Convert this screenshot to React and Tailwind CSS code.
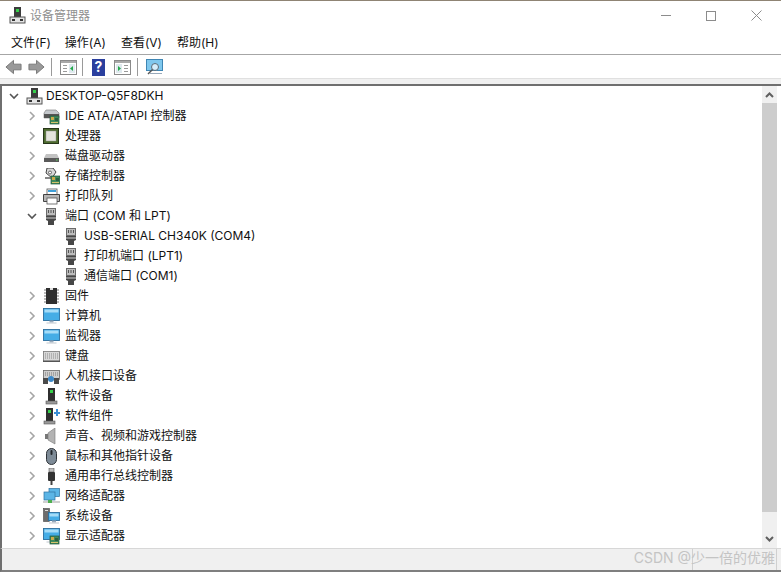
const cjk = "font-['Inter','Noto_Sans_CJK_SC',sans-serif]";

function Chevron({ open }) {
  return (
    <svg width="10" height="10" viewBox="0 0 10 10" fill="none" stroke={open ? '#555' : '#a6a6a6'} strokeWidth="1.6">
      {open ? <path d="M1 3l4 4 4-4" /> : <path d="M3 1l4 4-4 4" />}
    </svg>
  );
}

const Chip = ({ x = 8, y = 8 }) => (
  <g>
    <rect x={x} y={y} width="9" height="8" fill="#3f8a5c" stroke="#24563a" strokeWidth=".7" />
    <rect x={x + 1} y={y + 1} width="3" height="3" fill="#c9a94b" />
    <rect x={x + 5} y={y + 2} width="3" height="3" fill="#2b5f40" />
    <rect x={x + 1} y={y + 6} width="7" height="1" fill="#d6c36a" />
  </g>
);

const Tower = ({ x = 3 }) => (
  <g>
    <rect x={x + 2} y="0" width="7" height="13" fill="#2f2f2f" />
    <rect x={x + 4} y="2" width="3" height="3" fill="#35d04a" />
    <rect x={x} y="13" width="11" height="3" fill="#9a9a9a" stroke="#555" strokeWidth=".6" />
  </g>
);

const Screen = ({ x = 1, y = 2, w = 15, h = 10 }) => (
  <g>
    <rect x={x} y={y} width={w} height={h} fill="#45ade6" stroke="#2c6f9e" strokeWidth=".9" />
    <rect x={x + 1} y={y + 1} width={w - 2} height="3" fill="#a5dcf7" />
    <rect x={x + w / 2 - 2} y={y + h} width="4" height="2" fill="#9ab" />
    <rect x={x + w / 2 - 5} y={y + h + 2} width="10" height="1" fill="#c0c8cf" />
  </g>
);

function DeviceIcon({ name }) {
  const shapes = {
    root: (
      <g>
        <rect x="5" y="0" width="7" height="10" fill="#3c3c3c" />
        <rect x="7" y="2" width="3" height="3" fill="#35d04a" />
        <rect x="1" y="10" width="15" height="6" fill="#e4e4e4" stroke="#555" />
        <rect x="3" y="12" width="3" height="2" fill="#333" />
        <rect x="11" y="12" width="3" height="2" fill="#333" />
      </g>
    ),
    ide: (
      <g>
        <path d="M1 5l2-3h10l3 3v5H1z" fill="#c4c8cc" stroke="#777" strokeWidth=".6" />
        <rect x="1" y="6" width="15" height="4" fill="#555" />
        <Chip x={7} y={8} />
      </g>
    ),
    cpu: (
      <g>
        <rect x=".5" y=".5" width="15" height="15" fill="#4d6b2e" stroke="#27361a" />
        <rect x="3" y="3" width="10" height="10" fill="#e4e4dc" stroke="#999" strokeWidth=".5" />
      </g>
    ),
    disk: (
      <g>
        <path d="M3 6h11l2 4v4H1v-4z" fill="#c2c2c2" />
        <rect x="1" y="10" width="15" height="4" fill="#5a5a5a" />
        <rect x="13" y="11.5" width="1.5" height="1" fill="#5ddc5d" />
      </g>
    ),
    storage: (
      <g>
        <path d="M4 0h6l3 4-4 6-6-5z" fill="#d8d8d8" stroke="#333" strokeWidth=".9" />
        <circle cx="7" cy="4.5" r="1.5" fill="#fff" stroke="#333" strokeWidth=".7" />
        <rect x="2" y="9" width="6" height="2" fill="#888" />
        <Chip x={8} y={8} />
      </g>
    ),
    printer: (
      <g>
        <rect x="4" y="1" width="10" height="6" fill="#fff" stroke="#555" strokeWidth=".8" />
        <rect x="5" y="2" width="8" height="2" fill="#3f9fd8" />
        <path d="M0.5 6.5h16v7h-16z" fill="#b5b5b5" stroke="#333" strokeWidth=".9" />
        <rect x="4" y="10" width="10" height="6" fill="#fff" stroke="#555" strokeWidth=".8" />
      </g>
    ),
    port: (
      <g>
        <path d="M3 6h10v6l-2 1v4H5v-4l-2-1z" fill="#474747" />
        <rect x="3.5" y=".5" width="9" height="7" fill="#bdbdbd" stroke="#6a6a6a" />
        <path d="M5.5 2v3M8 2v3M10.5 2v3" stroke="#555" />
        <rect x="3" y="9" width="10" height="2" fill="#8a8a8a" />
      </g>
    ),
    firmware: (
      <g>
        <rect x="3" y="0" width="11" height="16" fill="#2f2f2f" />
        <path d="M1 2h2M1 5h2M1 8h2M1 11h2M1 14h2M14 2h2M14 5h2M14 8h2M14 11h2M14 14h2" stroke="#777" strokeWidth="1.2" />
        <rect x="7" y="0" width="3" height="2" fill="#ddd" />
      </g>
    ),
    computer: <Screen x={.5} y={.5} w={16} h={12} />,
    monitor: <Screen x={.5} y={1.5} w={16} h={11} />,
    keyboard: (
      <g>
        <rect x=".5" y="3.5" width="16" height="10" fill="#d8d8d8" stroke="#777" strokeWidth=".8" />
        <path d="M2 6h13M2 8h13M2 10h13" stroke="#8b8b8b" strokeDasharray="1 1" />
        <rect x="0" y="12.5" width="17" height="1.5" fill="#555" />
      </g>
    ),
    hid: (
      <g>
        <rect x=".5" y="2.5" width="16" height="9" fill="#cfcfcf" stroke="#666" strokeWidth=".8" />
        <path d="M2 5h13M2 7h13" stroke="#777" strokeDasharray="1 1" />
        <rect x="0" y="10" width="5" height="6" fill="#4a4a4a" />
        <rect x="11" y="10" width="5" height="6" fill="#4a4a4a" />
        <circle cx="8" cy="11" r="3" fill="#3c89c9" />
      </g>
    ),
    soft: <Tower x={3} />,
    softpart: (
      <g>
        <Tower x={1} />
        <path d="M11 4h2V1h2v3h2v2h-2v2h-2V6h-2z" fill="#3a8fd6" />
      </g>
    ),
    sound: (
      <g>
        <path d="M2 6h3v5H2z" fill="#777" />
        <path d="M5 5l7-5v16l-7-4z" fill="#b3b3b3" stroke="#777" strokeWidth=".6" />
      </g>
    ),
    mouse: (
      <g>
        <rect x="3.5" y=".5" width="10" height="16" rx="5" fill="#7e8b97" stroke="#2e3338" />
        <rect x="7.5" y="2" width="2" height="5" rx="1" fill="#22272b" />
      </g>
    ),
    usb: (
      <g>
        <rect x="6" y="0" width="5" height="4" fill="#bdbdbd" stroke="#555" strokeWidth=".6" />
        <rect x="5" y="4" width="7" height="9" rx="1" fill="#333" />
        <rect x="7.5" y="13" width="2" height="4" fill="#444" />
      </g>
    ),
    network: (
      <g>
        <rect x="6" y=".5" width="10.5" height="8" fill="#5bb5e6" stroke="#2c6f9e" strokeWidth=".7" />
        <rect x="1" y="4" width="11" height="8" fill="#5bb5e6" stroke="#2c6f9e" strokeWidth=".7" />
        <rect x="0" y="13" width="17" height="2" fill="#d0d0d0" />
        <rect x="5" y="12" width="4" height="3" fill="#4caf50" />
      </g>
    ),
    system: (
      <g>
        <rect x=".5" y=".5" width="6" height="13" fill="#6c6c6c" stroke="#333" strokeWidth=".5" />
        <rect x="2" y="2" width="3" height="1" fill="#ddd" />
        <Screen x={5.5} y={4.5} w={11} h={8} />
      </g>
    ),
    display: (
      <g>
        <Screen x={.5} y={.5} w={16} h={11} />
        <Chip x={7} y={8} />
      </g>
    ),
  };
  return (
    <svg width="17" height="17" viewBox="0 0 17 17" className="shrink-0">
      {shapes[name]}
    </svg>
  );
}

function TreeRow({ label, icon, open, leaf }) {
  return (
    <div className={`h-5 flex items-center ${leaf ? 'pl-[63px]' : 'pl-[27px]'}`}>
      {!leaf && (
        <span className="w-[16px] flex shrink-0">
          <Chevron open={open} />
        </span>
      )}
      <DeviceIcon name={icon} />
      <span className={`${leaf ? 'ml-[4px]' : 'ml-[5px]'} whitespace-nowrap`}>{label}</span>
    </div>
  );
}

const rows = [
  { label: 'IDE ATA/ATAPI 控制器', icon: 'ide' },
  { label: '处理器', icon: 'cpu' },
  { label: '磁盘驱动器', icon: 'disk' },
  { label: '存储控制器', icon: 'storage' },
  { label: '打印队列', icon: 'printer' },
  { label: '端口 (COM 和 LPT)', icon: 'port', open: true },
  { label: 'USB-SERIAL CH340K (COM4)', icon: 'port', leaf: true },
  { label: '打印机端口 (LPT1)', icon: 'port', leaf: true },
  { label: '通信端口 (COM1)', icon: 'port', leaf: true },
  { label: '固件', icon: 'firmware' },
  { label: '计算机', icon: 'computer' },
  { label: '监视器', icon: 'monitor' },
  { label: '键盘', icon: 'keyboard' },
  { label: '人机接口设备', icon: 'hid' },
  { label: '软件设备', icon: 'soft' },
  { label: '软件组件', icon: 'softpart' },
  { label: '声音、视频和游戏控制器', icon: 'sound' },
  { label: '鼠标和其他指针设备', icon: 'mouse' },
  { label: '通用串行总线控制器', icon: 'usb' },
  { label: '网络适配器', icon: 'network' },
  { label: '系统设备', icon: 'system' },
  { label: '显示适配器', icon: 'display' },
];

const ToolSep = () => <div className="w-px h-[18px] bg-[#9a9a9a] shrink-0" />;

const PaneIcon = ({ right }) => (
  <svg width="17" height="15" viewBox="0 0 17 15" className="shrink-0">
    <rect x=".5" y=".5" width="16" height="14" fill="#fff" stroke="#8a8a8a" />
    <rect x="1" y="1" width="15" height="2" fill="#a9a9a9" />
    <rect x={right ? 2 : 9} y="4" width="6" height="9" fill="#dfe9ee" />
    <rect x={right ? 10 : 3} y="5" width="4" height="1" fill="#999" />
    <rect x={right ? 10 : 3} y="8" width="4" height="1" fill="#999" />
    <rect x={right ? 10 : 3} y="11" width="4" height="1" fill="#999" />
    <path d={right ? 'M4 6l3 2.5L4 11z' : 'M13 6l-3 2.5 3 2.5z'} fill="#21a84a" />
  </svg>
);

const NavArrow = ({ right }) => (
  <svg width="17" height="16" viewBox="0 0 18 16" className={right ? 'shrink-0' : 'shrink-0 -scale-x-100'}>
    <path d="M1 5h8V1l8 7-8 7v-4H1z" fill="#9a9a9a" stroke="#777" />
  </svg>
);

export default function App() {
  return (
    <div className={`w-[781px] h-[572px] relative overflow-hidden bg-white text-[12px] text-[#111] flex flex-col ${cjk}`}>
      <div className="h-px bg-[#8f8474] shrink-0" />

      {/* title bar */}
      <div className="h-[29px] shrink-0 flex items-center pl-[9px]">
        <DeviceIcon name="root" />
        <span className="ml-[4px] text-[#8f8f8f]">设备管理器</span>
        <div className="ml-auto flex items-center gap-[35px] pr-[19px]">
          <div className="w-[10px] h-px bg-[#8c8c8c]" />
          <div className="w-[10px] h-[10px] border border-[#8c8c8c]" />
          <svg width="11" height="11" viewBox="0 0 11 11" stroke="#8c8c8c">
            <path d="M.5.5l10 10M10.5.5l-10 10" />
          </svg>
        </div>
      </div>

      {/* menu */}
      <div className="h-[25px] shrink-0 flex items-center pl-[11px] pt-[1px] gap-[15px] border-b border-[#a6a6a6]">
        <span className="-mr-px">文件(F)</span>
        <span>操作(A)</span>
        <span>查看(V)</span>
        <span>帮助(H)</span>
      </div>

      {/* toolbar */}
      <div className="h-[23px] shrink-0 flex items-center pl-[5px] pt-[1px]">
        <NavArrow />
        <div className="w-[6px] shrink-0" />
        <NavArrow right />
        <div className="w-[6px] shrink-0" />
        <ToolSep />
        <div className="w-[8px] shrink-0" />
        <PaneIcon />
        <div className="w-[5px] shrink-0" />
        <ToolSep />
        <div className="w-[9px] shrink-0" />
        <div className="w-[13px] h-[17px] shrink-0 bg-[#2a3f9e] text-white font-bold text-[14px] flex items-center justify-center leading-none">?</div>
        <div className="w-[9px] shrink-0" />
        <PaneIcon right />
        <div className="w-[6px] shrink-0" />
        <ToolSep />
        <div className="w-[8px] shrink-0" />
        <svg width="18" height="17" viewBox="0 0 18 17" className="shrink-0">
          <rect x=".5" y=".5" width="16" height="11" fill="#7fc8ee" stroke="#3f86b4" />
          <circle cx="9" cy="8" r="3.5" fill="#d5eefb" stroke="#5b6c78" />
          <path d="M6.5 10.5L2 15" stroke="#555" strokeWidth="1.5" />
          <rect x="4" y="14" width="12" height="1" fill="#9ab" />
        </svg>
      </div>

      <div className="h-[6px] shrink-0 bg-[#f0f0f0] border-t border-[#e0e0e0]" />

      {/* main area */}
      <div className="flex-1 flex min-h-0 border-l-2 border-t-2 border-l-[#6f6f6f] border-t-[#6f6f6f] pr-[4px]">
        <div className="flex-1 min-w-0 -ml-[2px]">
          <div className="h-5 flex items-center pl-[8px]">
            <span className="w-[18px] flex shrink-0 pl-[1px]">
              <Chevron open />
            </span>
            <DeviceIcon name="root" />
            <span className="ml-[3px] whitespace-nowrap">DESKTOP-Q5F8DKH</span>
          </div>
          {rows.map((r) => (
            <TreeRow key={r.label} {...r} />
          ))}
        </div>

        {/* scrollbar */}
        <div className="w-[15px] shrink-0 bg-[#f0f0f0] flex flex-col">
          <div className="h-[17px] flex items-center justify-center shrink-0">
            <svg width="9" height="6" viewBox="0 0 9 6" fill="none" stroke="#606060" strokeWidth="2">
              <path d="M1 5l3.5-3.5L8 5" />
            </svg>
          </div>
          <div className="h-[409px] bg-[#cdcdcd] shrink-0" />
          <div className="flex-1 flex items-end justify-center pb-[6px]">
            <svg width="9" height="6" viewBox="0 0 9 6" fill="none" stroke="#606060" strokeWidth="2">
              <path d="M1 1l3.5 3.5L8 1" />
            </svg>
          </div>
        </div>
      </div>

      {/* status bar */}
      <div className="h-[24px] shrink-0 bg-[#f0f0f0] border-t border-[#d7d7d7] border-b-2 border-b-[#7f7f7f] border-l-2 border-l-[#6f6f6f] flex justify-end pr-[4px]">
        <div className="w-[85px] border-l border-[#d0d0d0] border-r" />
      </div>

      {/* watermark */}
      <div className="absolute right-[6px] bottom-[7px] text-[14px] leading-none text-[#c4c4c4]">CSDN @少一倍的优雅</div>
    </div>
  );
}
